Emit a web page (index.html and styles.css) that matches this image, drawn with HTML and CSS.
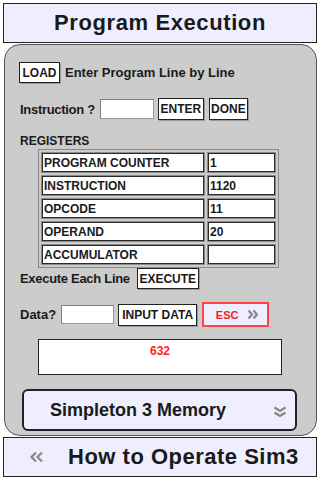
FILE: index.html
```html
<!DOCTYPE html>
<html lang="en">

<head>
    <meta charset="UTF-8">
    <meta name="viewport" content="width=device-width, initial-scale=1.0">
    <title>Program Execution</title>
    <link rel="stylesheet" href="styles.css">
</head>

<body>
    <header class="title-bar">Program Execution</header>

    <main class="panel">
        <div class="row row-load">
            <button class="btn btn-load">LOAD</button>
            <span class="label">Enter Program Line by Line</span>
        </div>

        <div class="row row-instr">
            <span class="label label-tight">Instruction ?</span>
            <input type="text" class="field field-instr">
            <button class="btn btn-enter">ENTER</button>
            <button class="btn btn-done">DONE</button>
        </div>

        <div class="section-title">REGISTERS</div>
        <table class="registers">
            <tr><td class="reg-name">PROGRAM COUNTER</td><td class="reg-value">1</td></tr>
            <tr><td class="reg-name">INSTRUCTION</td><td class="reg-value">1120</td></tr>
            <tr><td class="reg-name">OPCODE</td><td class="reg-value">11</td></tr>
            <tr><td class="reg-name">OPERAND</td><td class="reg-value">20</td></tr>
            <tr><td class="reg-name">ACCUMULATOR</td><td class="reg-value"></td></tr>
        </table>

        <div class="row row-exec">
            <span class="label label-tight">Execute Each Line</span>
            <button class="btn btn-execute">EXECUTE</button>
        </div>

        <div class="row row-data">
            <span class="label">Data?</span>
            <input type="text" class="field field-data">
            <button class="btn btn-input">INPUT DATA</button>
            <button class="btn-esc">
                <span>ESC</span>
                <svg width="12" height="11" viewBox="0 0 12 11">
                    <path d="M1.5 1.5 L5 5.5 L1.5 9.5 M6.5 1.5 L10 5.5 L6.5 9.5" fill="none" stroke="#888" stroke-width="2.2" />
                </svg>
            </button>
        </div>

        <div class="output">632</div>

        <button class="memory-btn">
            <span>Simpleton 3 Memory</span>
            <svg class="memory-icon" width="14" height="12" viewBox="0 0 14 12">
                <path d="M1.5 1.5 L7 5 L12.5 1.5 M1.5 6.5 L7 10 L12.5 6.5" fill="none" stroke="#888" stroke-width="2.2" />
            </svg>
        </button>
    </main>

    <footer class="nav-bar">
        <svg class="back-icon" width="16" height="12" viewBox="0 0 16 12">
            <path d="M7 1.5 L2.5 6 L7 10.5 M13 1.5 L8.5 6 L13 10.5" fill="none" stroke="#888" stroke-width="2.2" />
        </svg>
        <span>How to Operate Sim3</span>
    </footer>
</body>

</html>
```

FILE: styles.css
```css
:root {
    --lavender: #eeeeff;
    --panel: #cccccc;
    --ink: #1a1a1a;
    --line: #222222;
}

body {
    margin: 0;
    width: 320px;
    height: 480px;
    background-color: #ffffff;
    font-family: "Liberation Sans", Arial, sans-serif;
    color: var(--ink);
    overflow: hidden;
}

/* top title */
.title-bar {
    box-sizing: border-box;
    width: 314px;
    height: 40px;
    margin: 3px 0 0 3px;
    border: 1px solid var(--line);
    background-color: var(--lavender);
    display: flex;
    align-items: center;
    justify-content: center;
    font-size: 22px;
    font-weight: 700;
    letter-spacing: 0.6px;
}

/* grey rounded body */
.panel {
    box-sizing: border-box;
    width: 313px;
    height: 392px;
    margin: 1px 0 0 4px;
    padding: 17px 0 0 14px;
    border: 1px solid #555555;
    border-radius: 16px;
    background-color: var(--panel);
    display: flex;
    flex-direction: column;
    align-items: flex-start;
}

.row {
    display: flex;
    align-items: center;
}

.label {
    font-size: 13px;
    font-weight: 700;
    padding-left: 1px;
}

.label-tight {
    letter-spacing: -0.3px;
}

.btn {
    box-sizing: border-box;
    height: 21px;
    padding: 0;
    border: 1px solid var(--line);
    box-shadow: 1px 1px 0 #999999;
    background-color: #ffffff;
    font-family: inherit;
    font-size: 12px;
    font-weight: 700;
    color: var(--ink);
    text-align: center;
}

.field {
    box-sizing: border-box;
    height: 20px;
    border: 1px solid #9a9a9a;
    border-top-color: #808080;
    border-left-color: #808080;
    background-color: #ffffff;
    padding: 0;
}

.row-load {
    height: 21px;
    gap: 4px;
}

.btn-load {
    width: 41px;
}

.row-instr {
    margin-top: 15px;
    height: 22px;
}

.field-instr {
    width: 54px;
    margin-left: 5px;
}

.btn-enter {
    width: 46px;
    height: 22px;
    margin-left: 4px;
}

.btn-done {
    width: 39px;
    height: 22px;
    margin-left: 5px;
}

.section-title {
    margin-top: 14px;
    padding-left: 1px;
    font-size: 12px;
    font-weight: 700;
    line-height: 15px;
}

/* register table */
.registers {
    margin: 0 0 0 19px;
    border: 1px solid #8a8a8a;
    border-spacing: 2px;
    padding: 0;
}

.registers td {
    box-sizing: border-box;
    height: 21px;
    padding: 0 0 0 2px;
    background-color: #ffffff;
    border: 1px solid #8a8a8a;
    box-shadow: inset 0 0 0 1px #2a2a2a;
    font-size: 12px;
    font-weight: 700;
}

.reg-name {
    width: 164px;
}

.reg-value {
    width: 69px;
}

.row-exec {
    height: 21px;
    gap: 7px;
}

.btn-execute {
    width: 62px;
}

.row-data {
    margin-top: 13px;
    height: 25px;
}

.field-data {
    width: 53px;
    height: 19px;
    margin-left: 5px;
}

.btn-input {
    width: 79px;
    height: 22px;
    margin-left: 4px;
}

.btn-esc {
    box-sizing: border-box;
    width: 67px;
    height: 25px;
    margin-left: 5px;
    padding: 0 0 0 4px;
    border: 2px solid #ff4444;
    background-color: var(--lavender);
    display: flex;
    align-items: center;
    justify-content: center;
    gap: 9px;
    font-family: inherit;
    font-size: 11px;
    font-weight: 700;
    color: #ee2222;
}

.output {
    box-sizing: border-box;
    width: 244px;
    height: 36px;
    margin: 12px 0 0 19px;
    padding-top: 4px;
    border: 1px solid var(--line);
    background-color: #ffffff;
    text-align: center;
    font-size: 12px;
    font-weight: 700;
    color: #ff2222;
}

.memory-btn {
    box-sizing: border-box;
    width: 275px;
    height: 42px;
    margin: 14px 0 0 3px;
    padding: 0 8px 0 26px;
    border: 2px solid var(--line);
    border-radius: 6px;
    background-color: var(--lavender);
    display: flex;
    align-items: center;
    justify-content: space-between;
    font-family: inherit;
    font-size: 18px;
    font-weight: 700;
    color: var(--ink);
}

.memory-icon {
    margin-top: 3px;
}

/* bottom nav */
.nav-bar {
    box-sizing: border-box;
    width: 314px;
    height: 40px;
    margin: 1px 0 0 3px;
    padding-left: 25px;
    border: 1px solid var(--line);
    background-color: var(--lavender);
    display: flex;
    align-items: center;
    gap: 23px;
    font-size: 22px;
    font-weight: 700;
    letter-spacing: 0.5px;
}
```
